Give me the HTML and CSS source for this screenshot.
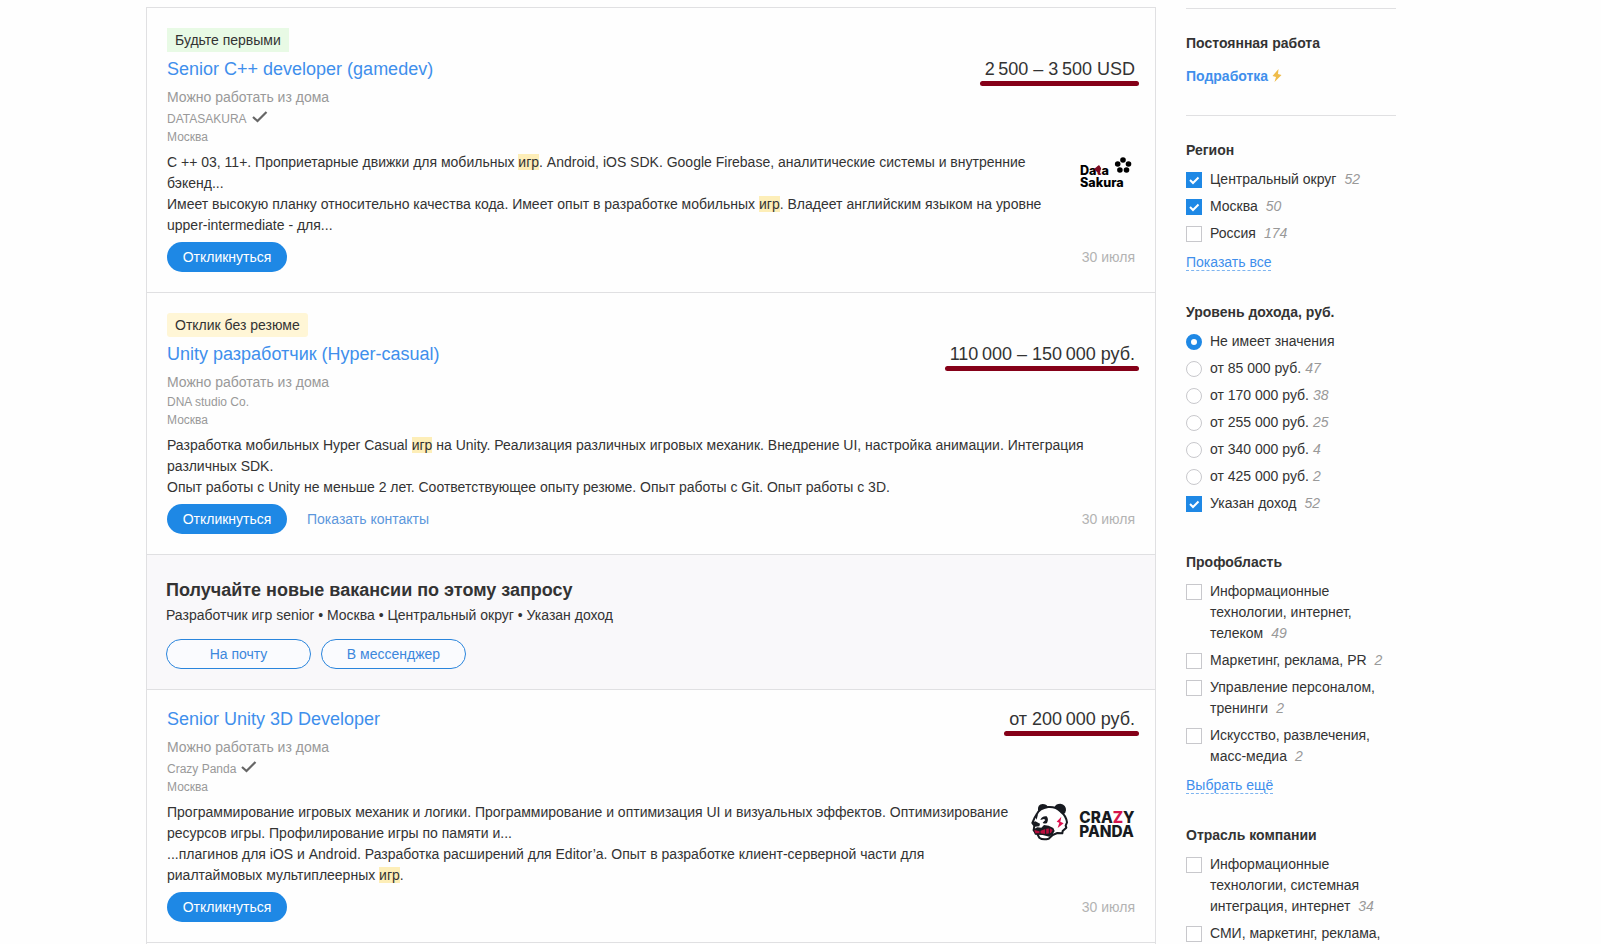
FILE: index.html
```html
<!DOCTYPE html>
<html lang="ru">
<head>
  <meta charset="UTF-8">
  <meta name="viewport" content="width=device-width, initial-scale=1.0">
  <title>Вакансии</title>
  <link rel="stylesheet" href="styles.css">
</head>
<body>
  <div class="page">
    <!-- Vacancy list -->
    <main class="vacancies">
      <article class="vacancy">
        <span class="badge badge-green">Будьте первыми</span>
        <div class="vacancy-header">
          <h2 class="vacancy-title"><a href="#">Senior C++ developer (gamedev)</a></h2>
          <span class="salary">2&#8239;500 – 3&#8239;500 USD</span>
        </div>
        <div class="remote">Можно работать из дома</div>
        <div class="company company-verified">
          <a href="#">DATASAKURA</a>
          <svg class="check-icon" viewBox="0 0 16 12"><path d="M1 6 L5.5 10 L14.5 1" fill="none" stroke="#666" stroke-width="2.2"/></svg>
        </div>
        <div class="city">Москва</div>
        <div class="vacancy-body">
          <div class="description">
            <p>C ++ 03, 11+. Проприетарные движки для мобильных <mark>игр</mark>. Android, iOS SDK. Google Firebase, аналитические системы и внутренние бэкенд...</p>
            <p>Имеет высокую планку относительно качества кода. Имеет опыт в разработке мобильных <mark>игр</mark>. Владеет английским языком на уровне upper-intermediate - для...</p>
          </div>
          <svg class="logo logo-sakura" viewBox="0 0 60 44">
            <g class="logo-text" font-size="12.6">
              <text x="5" y="23">Da<tspan fill="#7d0a20">t</tspan>a</text>
              <text x="5" y="35">Sakura</text>
            </g>
            <path d="M19 17 L24 13 L26 16 L25 21 L22 20 Z" fill="#7d0a20"/>
            <circle cx="48" cy="8" r="2.8"/>
            <circle cx="42.7" cy="12" r="2.8"/>
            <circle cx="53.5" cy="12" r="2.8"/>
            <circle cx="44.9" cy="18" r="2.8"/>
            <circle cx="51.5" cy="18" r="2.8"/>
          </svg>
        </div>
        <div class="vacancy-footer">
          <button class="btn btn-primary">Откликнуться</button>
          <span class="date">30 июля</span>
        </div>
      </article>

      <article class="vacancy">
        <span class="badge badge-yellow">Отклик без резюме</span>
        <div class="vacancy-header">
          <h2 class="vacancy-title"><a href="#">Unity разработчик (Hyper-casual)</a></h2>
          <span class="salary">110&#8239;000 – 150&#8239;000 руб.</span>
        </div>
        <div class="remote">Можно работать из дома</div>
        <div class="company"><a href="#">DNA studio Co.</a></div>
        <div class="city">Москва</div>
        <div class="vacancy-body">
          <div class="description">
            <p>Разработка мобильных Hyper Casual <mark>игр</mark> на Unity. Реализация различных игровых механик. Внедрение UI, настройка анимации. Интеграция различных SDK.</p>
            <p>Опыт работы с Unity не меньше 2 лет. Соответствующее опыту резюме. Опыт работы с Git. Опыт работы с 3D.</p>
          </div>
        </div>
        <div class="vacancy-footer">
          <button class="btn btn-primary">Откликнуться</button>
          <a class="contacts" href="#">Показать контакты</a>
          <span class="date">30 июля</span>
        </div>
      </article>

      <!-- Subscription -->
      <section class="subscribe">
        <h2>Получайте новые вакансии по этому запросу</h2>
        <p>Разработчик игр senior • Москва • Центральный округ • Указан доход</p>
        <div class="subscribe-buttons">
          <button class="btn btn-outline">На почту</button>
          <button class="btn btn-outline">В мессенджер</button>
        </div>
      </section>

      <article class="vacancy">
        <div class="vacancy-header">
          <h2 class="vacancy-title"><a href="#">Senior Unity 3D Developer</a></h2>
          <span class="salary">от 200&#8239;000 руб.</span>
        </div>
        <div class="remote">Можно работать из дома</div>
        <div class="company company-verified">
          <a href="#">Crazy Panda</a>
          <svg class="check-icon" viewBox="0 0 16 12"><path d="M1 6 L5.5 10 L14.5 1" fill="none" stroke="#666" stroke-width="2.2"/></svg>
        </div>
        <div class="city">Москва</div>
        <div class="vacancy-body">
          <div class="description">
            <p>Программирование игровых механик и логики. Программирование и оптимизация UI и визуальных эффектов. Оптимизирование ресурсов игры. Профилирование игры по памяти и...</p>
            <p>...плагинов для iOS и Android. Разработка расширений для Editor’а. Опыт в разработке клиент-серверной части для риалтаймовых мультиплеерных <mark>игр</mark>.</p>
          </div>
          <svg class="logo logo-panda" viewBox="33 21 312 117">
            <!-- head -->
            <path d="M50 58 Q58 40 84 36 Q108 34 122 50 Q138 62 141 82 L137 92 L139 98 L128 108 L127 115 L112 114 L98 120 L86 131 Q68 136 58 128 L50 113 L41 106 L43 92 L37 84 L43 70 Z" fill="#fff" stroke="#171a20" stroke-width="6" stroke-linejoin="round"/>
            <!-- ears -->
            <path d="M54 46 Q52 28 68 27 Q80 27 83 35 Q66 38 56 48 Z" fill="#171a20"/>
            <path d="M103 36 Q108 26 121 26 Q139 29 138 46 Q137 56 130 58 Q118 42 103 36 Z" fill="#171a20"/>
            <!-- eye patch and nose -->
            <path d="M61 75 Q66 62 80 64 Q87 72 81 84 Q74 88 68 83 L76 75 L72 72 Z" fill="#171a20"/>
            <path d="M38 82 L46 79 L60 86 L58 94 L44 95 Z" fill="#171a20"/>
            <path d="M45 64 L54 57 L50 74 Z" fill="#171a20"/>
            <!-- mouth -->
            <path d="M38 104 L52 97 L64 98 L72 90 L86 92 L100 99 L104 108 L98 118 L88 125 L68 120 L45 119 Z" fill="#171a20"/>
            <path d="M43 105 L58 109 L76 102 L90 100 L98 105 L93 114 L76 117 L60 115 L46 115 Z" fill="#b80d3c"/>
            <path d="M60 104 v13 M77 101 v17 M88 99 v17" stroke="#171a20" stroke-width="3"/>
            <!-- cheek bolt -->
            <path d="M124 65 L110 80 L118 83 L113 99 L131 85 L121 80 Z" fill="#e0114f"/>
            <g class="logo-text" font-size="46" fill="#171a20">
              <text x="178" y="84">CRA<tspan fill="#d4144c">Z</tspan>Y</text>
              <text x="178" y="127">PANDA</text>
            </g>
          </svg>
        </div>
        <div class="vacancy-footer">
          <button class="btn btn-primary">Откликнуться</button>
          <span class="date">30 июля</span>
        </div>
      </article>
    </main>

    <!-- Filters -->
    <aside class="filters">
      <nav class="work-type">
        <strong>Постоянная работа</strong>
        <a href="#">Подработка <svg class="bolt-icon" viewBox="0 0 10 13"><path d="M6.5 0 L0.5 7 L4 8 L2.5 13 L9.5 6 L6 5 Z" fill="#efbc4a"/></svg></a>
      </nav>

      <fieldset class="group">
        <legend>Регион</legend>
        <label><input type="checkbox" checked><span>Центральный округ<i>52</i></span></label>
        <label><input type="checkbox" checked><span>Москва<i>50</i></span></label>
        <label><input type="checkbox"><span>Россия<i>174</i></span></label>
        <div class="more"><a href="#">Показать все</a></div>
      </fieldset>

      <fieldset class="group group-income">
        <legend>Уровень дохода, руб.</legend>
        <label><input type="radio" name="income" checked><span>Не имеет значения</span></label>
        <label><input type="radio" name="income"><span>от 85 000 руб.<i>47</i></span></label>
        <label><input type="radio" name="income"><span>от 170 000 руб.<i>38</i></span></label>
        <label><input type="radio" name="income"><span>от 255 000 руб.<i>25</i></span></label>
        <label><input type="radio" name="income"><span>от 340 000 руб.<i>4</i></span></label>
        <label><input type="radio" name="income"><span>от 425 000 руб.<i>2</i></span></label>
        <label><input type="checkbox" checked><span>Указан доход<i>52</i></span></label>
      </fieldset>

      <fieldset class="group">
        <legend>Профобласть</legend>
        <label><input type="checkbox"><span>Информационные технологии, интернет, телеком<i>49</i></span></label>
        <label><input type="checkbox"><span>Маркетинг, реклама, PR<i>2</i></span></label>
        <label><input type="checkbox"><span>Управление персоналом, тренинги<i>2</i></span></label>
        <label><input type="checkbox"><span>Искусство, развлечения, масс-медиа<i>2</i></span></label>
        <div class="more"><a href="#">Выбрать ещё</a></div>
      </fieldset>

      <fieldset class="group">
        <legend>Отрасль компании</legend>
        <label><input type="checkbox"><span>Информационные технологии, системная интеграция, интернет<i>34</i></span></label>
        <label><input type="checkbox"><span>СМИ, маркетинг, реклама,</span></label>
      </fieldset>
    </aside>
  </div>
</body>
</html>
```
FILE: styles.css
```css
/* General Styles */
* {
  box-sizing: border-box;
}

body {
  margin: 0;
  font-family: "Liberation Sans", Arial, sans-serif;
  font-size: 14px;
  line-height: 21px;
  color: #333;
  background-color: #fefefe;
}

a {
  color: #3f8fec;
  text-decoration: none;
}

h2, p {
  margin: 0;
}

.page {
  display: flex;
  gap: 30px;
  max-width: 1309px;
  min-height: 100vh;
  margin: 0 auto;
  padding: 7px 59px 0 0;
}

/* Vacancy list */
.vacancies {
  flex: 1;
  min-width: 0;
  border: 1px solid #e0e0e2;
  border-bottom: none;
}

.vacancy {
  padding: 20px;
  border-bottom: 1px solid #e0e0e2;
}

.badge {
  display: block;
  width: fit-content;
  height: 24px;
  margin-bottom: 8px;
  padding: 0 8px;
  line-height: 24px;
}

.badge-green {
  background-color: #e8fae5;
}

.badge-yellow {
  background-color: #fff6d6;
  border-radius: 3px;
}

.vacancy-header {
  display: flex;
  justify-content: space-between;
  margin-bottom: 9px;
  font-size: 18px;
  line-height: 18px;
}

.vacancy-title {
  font-size: 18px;
  font-weight: normal;
}

.salary {
  position: relative;
  white-space: nowrap;
}

/* Marker line under the salary */
.salary::after {
  content: "";
  position: absolute;
  left: -5px;
  right: -4px;
  top: 21px;
  height: 5px;
  border-radius: 3px;
  background-color: #850018;
}

.remote {
  color: #999;
}

.company, .city {
  font-size: 12px;
  line-height: 18px;
  color: #999;
}

.company a {
  color: #999;
}

.company-verified {
  display: flex;
  align-items: flex-end;
  gap: 5px;
  height: 20px;
}

.check-icon {
  width: 16px;
  height: 12px;
  margin-bottom: 5px;
}

.vacancy-body {
  display: flex;
  align-items: flex-start;
  gap: 20px;
  margin: 6px 0;
}

.description {
  flex: 1;
}

mark {
  color: inherit;
  background-color: #fdeeb8;
}

.logo {
  flex: none;
}

.logo-sakura {
  width: 60px;
  height: 44px;
}

.logo-panda {
  width: 104px;
  height: 39px;
}

.logo-text {
  font-family: Inter, sans-serif;
  font-weight: 800;
}

.vacancy-footer {
  display: flex;
  align-items: center;
  gap: 20px;
}

.contacts {
  color: #5c97dc;
}

.date {
  margin-left: auto;
  color: #b3b3b3;
}

.btn {
  height: 30px;
  padding: 0;
  border: none;
  border-radius: 15px;
  font-family: inherit;
  font-size: 14px;
  cursor: pointer;
}

.btn-primary {
  width: 120px;
  color: #fff;
  background-color: #1e88e5;
}

.btn-outline {
  width: 145px;
  color: #3c87dc;
  border: 1px solid #2a85dc;
  background-color: #fafbfe;
}

/* Subscription */
.subscribe {
  padding: 20px 19px;
  background-color: #f9f8fa;
  border-bottom: 1px solid #e0e0e2;
}

.subscribe h2 {
  font-size: 18px;
  line-height: 30px;
}

.subscribe-buttons {
  display: flex;
  gap: 10px;
  margin-top: 13px;
}

/* Filters */
.filters {
  flex: none;
  width: 210px;
  padding-top: 1px;
}

.work-type {
  display: flex;
  flex-direction: column;
  gap: 12px;
  margin-bottom: 24px;
  padding: 24px 0 28px;
  border-top: 1px solid #e0e0e2;
  border-bottom: 1px solid #e0e0e2;
  font-weight: bold;
}

.bolt-icon {
  width: 10px;
  height: 13px;
  vertical-align: -1px;
}

.group {
  margin: 0 0 29px;
  padding: 0;
  border: none;
}

.group-income {
  margin-bottom: 38px;
}

.group legend {
  margin-bottom: 8px;
  padding: 0;
  font-weight: bold;
}

.group label {
  display: flex;
  align-items: flex-start;
  gap: 8px;
}

.group label + label {
  margin-top: 6px;
}

.group i {
  margin-left: 8px;
  color: #999;
}

.group input[type="radio"] + span i {
  margin-left: 4px;
}

.group input {
  flex: none;
  appearance: none;
  width: 16px;
  height: 16px;
  margin: 3px 0 0;
  border: 1px solid #c8c8cc;
  background-color: #fff;
}

.group input[type="radio"] {
  border-radius: 50%;
}

.group input[type="checkbox"]:checked {
  border-color: #1e88e5;
  background: #1e88e5 url("data:image/svg+xml,%3Csvg xmlns='http://www.w3.org/2000/svg' viewBox='0 0 14 14'%3E%3Cpath d='M3 7 L6 10 L11.5 4.5' fill='none' stroke='white' stroke-width='2'/%3E%3C/svg%3E") center no-repeat;
}

.group input[type="radio"]:checked {
  border: 5px solid #1e88e5;
}

.more {
  margin-top: 8px;
}

.more a {
  border-bottom: 1px dashed #7db4f0;
}
```
